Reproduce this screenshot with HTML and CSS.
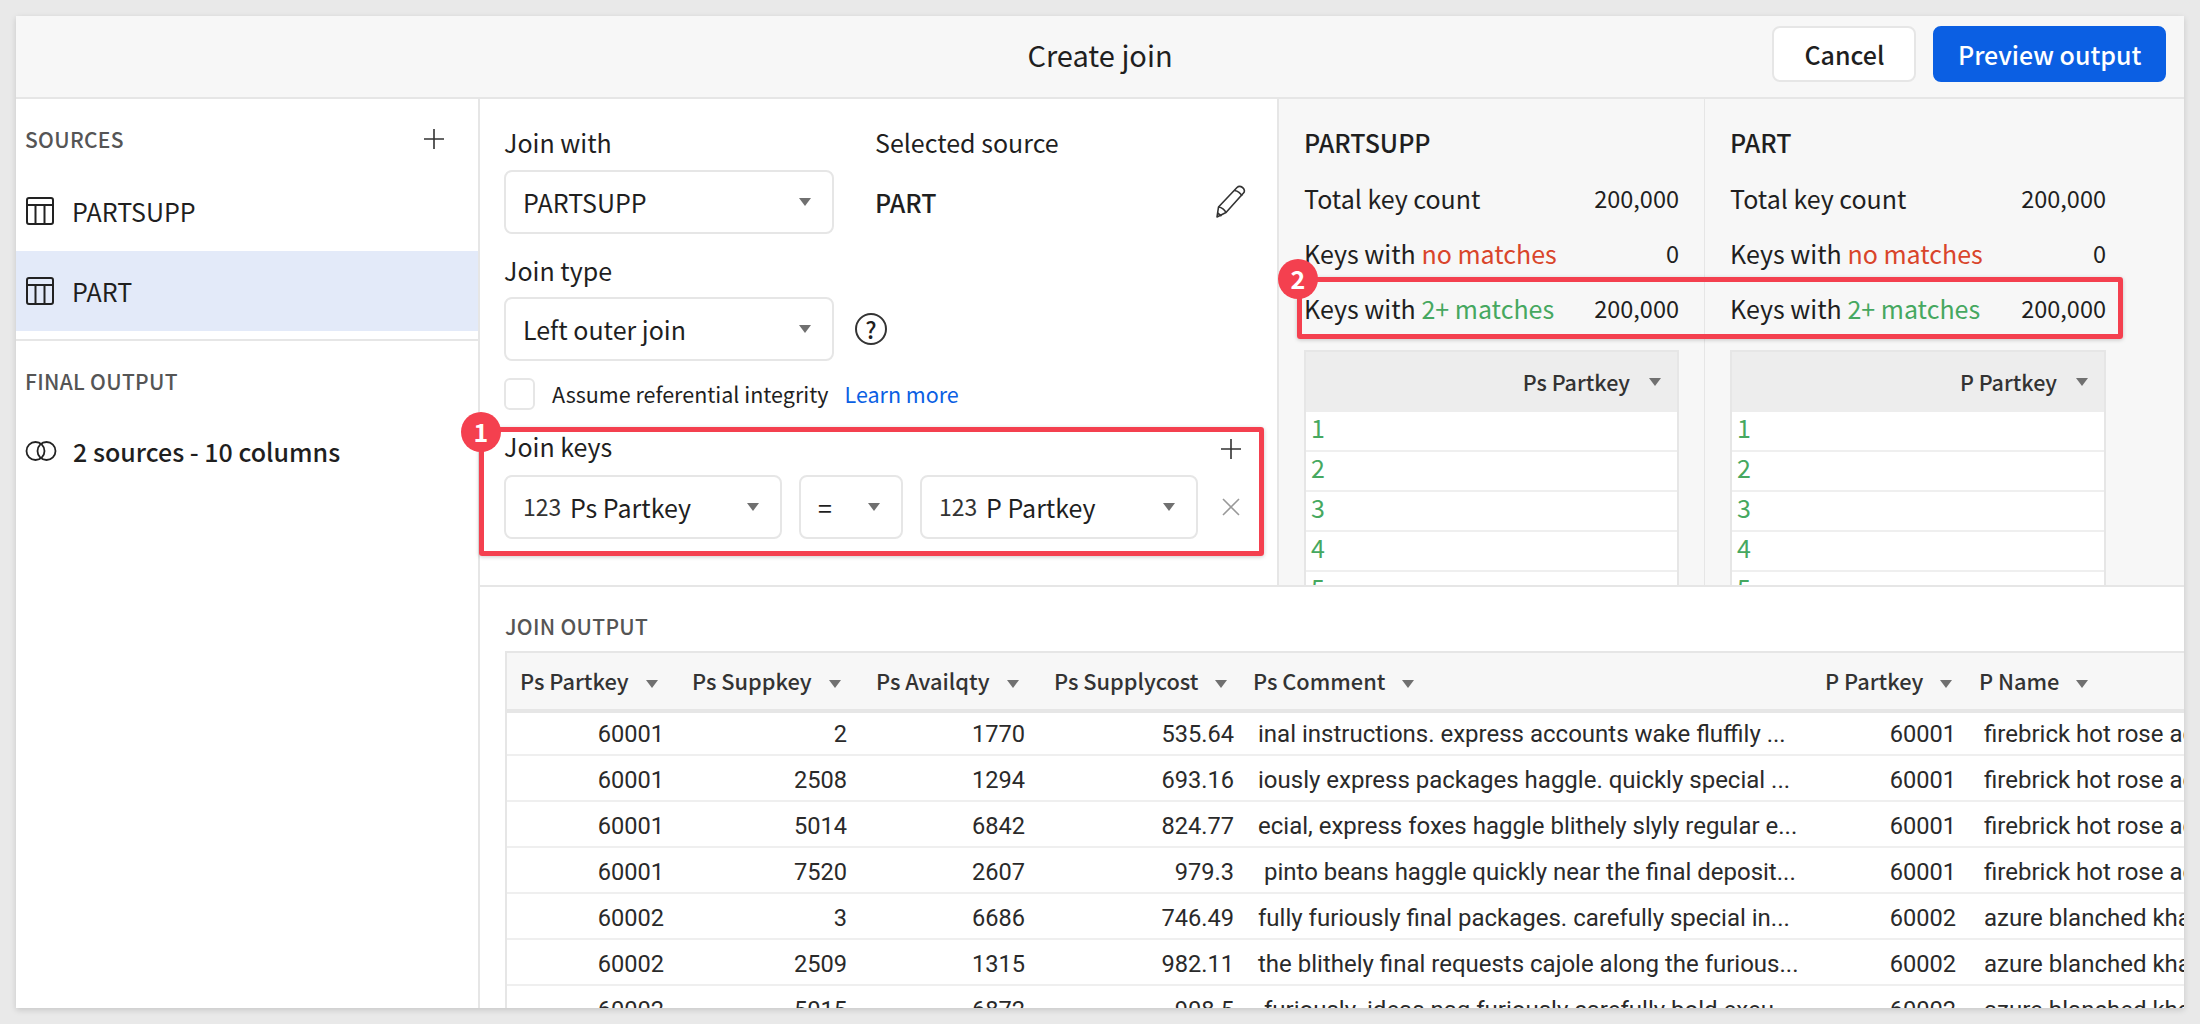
FILE: index.html
```html
<!DOCTYPE html>
<html>
<head>
<meta charset="UTF-8">
<title>Create join</title>
<link rel="stylesheet" href="styles.css">
</head>
<body>
<div class="card">
  <!-- header -->
  <div class="topbar">
    <div class="title">Create join</div>
    <div class="actions">
      <button class="btn">Cancel</button>
      <button class="btn primary">Preview output</button>
    </div>
  </div>
  <div class="content">
    <!-- left list -->
    <div class="sidebar">
      <div class="side-head">
        <span class="section">SOURCES</span>
        <svg class="side-plus" width="20" height="20" viewBox="0 0 20 20"><path d="M10 0v20M0 10h20" stroke="#333" stroke-width="1.6" fill="none"/></svg>
      </div>
      <div class="source">
        <svg width="28" height="28" viewBox="0 0 28 28" fill="none" stroke="#222" stroke-width="2"><rect x="1" y="1" width="26" height="26" rx="2"/><path d="M1 8h26M9.5 8v19M18.500 8v19"/></svg>
        <span>PARTSUPP</span>
      </div>
      <div class="source active">
        <svg width="28" height="28" viewBox="0 0 28 28" fill="none" stroke="#222" stroke-width="2"><rect x="1" y="1" width="26" height="26" rx="2"/><path d="M1 8h26M9.5 8v19M18.500 8v19"/></svg>
        <span>PART</span>
      </div>
      <div class="side-final">
        <div class="section">FINAL OUTPUT</div>
        <div class="final-row">
          <svg width="32" height="20" viewBox="0 0 32 20" fill="none" stroke="#222" stroke-width="1.8"><circle cx="10.500" cy="10" r="9"/><circle cx="21.500" cy="10" r="9"/></svg>
          <strong>2 sources - 10 columns</strong>
        </div>
      </div>
    </div>

    <div class="main">
      <div class="upper">
        <!-- join form -->
        <div class="form">
          <div class="form-row">
            <div class="field">
              <div class="label">Join with</div>
              <div class="select wide"><span>PARTSUPP</span><i class="caret"></i></div>
            </div>
            <div class="field grow">
              <div class="label">Selected source</div>
              <div class="selected">
                <strong>PART</strong>
                <svg width="32" height="34" viewBox="0 0 32 34" fill="none" stroke="#333" stroke-width="1.6" stroke-linejoin="round"><path d="M2 32l1.500-10L22 2.500c1.500-1.500 3.500-1.500 5.500 0s2.500 4 1 5.500L11 27.500z"/><path d="M3.500 22c3 .5 6 2.500 7.500 5.500M19.500 5.500c3 .5 6 2.500 7.500 5.500M2.500 28l4 3"/></svg>
              </div>
            </div>
          </div>
          <div class="label type-label">Join type</div>
          <div class="type-row">
            <div class="select wide"><span>Left outer join</span><i class="caret"></i></div>
            <div class="help">?</div>
          </div>
          <div class="check-row">
            <div class="checkbox"></div>
            <span>Assume referential integrity</span>
            <a class="link" href="#">Learn more</a>
          </div>
          <div class="keys-head">
            <div class="label">Join keys</div>
            <svg class="keys-plus" width="20" height="20" viewBox="0 0 20 20"><path d="M10 0v20M0 10h20" stroke="#333" stroke-width="1.6" fill="none"/></svg>
          </div>
          <div class="keys-row">
            <div class="select key"><small>123</small><span>Ps Partkey</span><i class="caret"></i></div>
            <div class="select op"><span>=</span><i class="caret"></i></div>
            <div class="select key"><small>123</small><span>P Partkey</span><i class="caret"></i></div>
            <svg class="key-x" width="18" height="18" viewBox="0 0 18 18"><path d="M1 1l16 16M17 1L1 17" stroke="#999" stroke-width="1.600" fill="none"/></svg>
          </div>
        </div>

        <!-- key stats -->
        <div class="stats">
          <div class="stat-col">
            <div class="stat-title">PARTSUPP</div>
            <div class="stat"><span>Total key count</span><b>200,000</b></div>
            <div class="stat"><span>Keys with <em class="red">no matches</em></span><b>0</b></div>
            <div class="stat"><span>Keys with <em class="green">2+ matches</em></span><b>200,000</b></div>
            <div class="mini">
              <div class="mini-head">Ps Partkey<i class="caret"></i></div>
              <div class="mini-row">1</div>
              <div class="mini-row">2</div>
              <div class="mini-row">3</div>
              <div class="mini-row">4</div>
              <div class="mini-row">5</div>
            </div>
          </div>
          <div class="stat-col">
            <div class="stat-title">PART</div>
            <div class="stat"><span>Total key count</span><b>200,000</b></div>
            <div class="stat"><span>Keys with <em class="red">no matches</em></span><b>0</b></div>
            <div class="stat"><span>Keys with <em class="green">2+ matches</em></span><b>200,000</b></div>
            <div class="mini">
              <div class="mini-head">P Partkey<i class="caret"></i></div>
              <div class="mini-row">1</div>
              <div class="mini-row">2</div>
              <div class="mini-row">3</div>
              <div class="mini-row">4</div>
              <div class="mini-row">5</div>
            </div>
          </div>
        </div>
      </div>

      <!-- output table -->
      <div class="output">
        <div class="section out-title">JOIN OUTPUT</div>
        <div class="grid">
          <div class="grid-head">
            <div>Ps Partkey<i class="caret"></i></div>
            <div>Ps Suppkey<i class="caret"></i></div>
            <div>Ps Availqty<i class="caret"></i></div>
            <div>Ps Supplycost<i class="caret"></i></div>
            <div>Ps Comment<i class="caret"></i></div>
            <div>P Partkey<i class="caret"></i></div>
            <div>P Name<i class="caret"></i></div>
          </div>
          <div class="grid-row"><div class="num">60001</div><div class="num">2</div><div class="num">1770</div><div class="num">535.64</div><div class="txt">inal instructions. express accounts wake fluffily ...</div><div class="num">60001</div><div class="txt name">firebrick hot rose aquamarine drab</div></div>
          <div class="grid-row"><div class="num">60001</div><div class="num">2508</div><div class="num">1294</div><div class="num">693.16</div><div class="txt">iously express packages haggle. quickly special ...</div><div class="num">60001</div><div class="txt name">firebrick hot rose aquamarine drab</div></div>
          <div class="grid-row"><div class="num">60001</div><div class="num">5014</div><div class="num">6842</div><div class="num">824.77</div><div class="txt">ecial, express foxes haggle blithely slyly regular e...</div><div class="num">60001</div><div class="txt name">firebrick hot rose aquamarine drab</div></div>
          <div class="grid-row"><div class="num">60001</div><div class="num">7520</div><div class="num">2607</div><div class="num">979.3</div><div class="txt">&nbsp;pinto beans haggle quickly near the final deposit...</div><div class="num">60001</div><div class="txt name">firebrick hot rose aquamarine drab</div></div>
          <div class="grid-row"><div class="num">60002</div><div class="num">3</div><div class="num">6686</div><div class="num">746.49</div><div class="txt">fully furiously final packages. carefully special in...</div><div class="num">60002</div><div class="txt name">azure blanched khaki snow plum</div></div>
          <div class="grid-row"><div class="num">60002</div><div class="num">2509</div><div class="num">1315</div><div class="num">982.11</div><div class="txt">the blithely final requests cajole along the furious...</div><div class="num">60002</div><div class="txt name">azure blanched khaki snow plum</div></div>
          <div class="grid-row"><div class="num">60002</div><div class="num">5015</div><div class="num">6872</div><div class="num">908.5</div><div class="txt">&nbsp;furiously. ideas nag furiously carefully bold exeu...</div><div class="num">60002</div><div class="txt name">azure blanched khaki snow plum</div></div>
        </div>
      </div>
    </div>
  </div>

  <!-- red callouts sit over the panels -->
  <div class="callout box1"></div>
  <div class="callout box2"></div>
  <div class="badge badge1">1</div>
  <div class="badge badge2">2</div>
</div>
</body>
</html>
```

FILE: styles.css
```css
* {
	box-sizing: border-box;
}
body {
	margin: 0;
	padding: 16px;
	height: 1024px;
	overflow: hidden;
	background-color: #e9e9e9;
	color: #1f1f1f;
	font-family: "Noto Sans CJK SC", "Liberation Sans", sans-serif;
	font-size: 25px;
	line-height: 32px;
}
.card {
	position: relative;
	display: flex;
	flex-direction: column;
	width: 2168px;
	height: 992px;
	overflow: hidden;
	background-color: #fff;
	box-shadow: 0 2px 6px rgba(0, 0, 0, 0.15);
}
.caret {
	display: inline-block;
	flex: none;
	width: 0;
	height: 0;
	border-left: 6px solid transparent;
	border-right: 6px solid transparent;
	border-top: 8px solid #707070;
}

/* header */
.topbar {
	position: relative;
	flex: none;
	display: flex;
	justify-content: flex-end;
	align-items: center;
	height: 83px;
	padding: 0 18px 5px 0;
	background-color: #f7f7f7;
	border-bottom: 2px solid #e6e6e6;
}
.title {
	position: absolute;
	left: 0;
	right: 0;
	text-align: center;
	font-size: 29px;
}
.actions {
	display: flex;
	gap: 17px;
}
.btn {
	height: 56px;
	padding: 0 30px;
	border: 2px solid #e6e6e6;
	border-radius: 8px;
	background-color: #fff;
	color: #1f1f1f;
	font-family: inherit;
	font-size: 25px;
	font-weight: 500;
}
.btn.primary {
	padding: 0 22.500px;
	border-color: #0b5fe3;
	background-color: #0b5fe3;
	color: #fff;
}

.content {
	flex: 1;
	display: flex;
	min-height: 0;
}

/* sidebar */
.sidebar {
	flex: none;
	width: 464px;
	border-right: 2px solid #e6e6e6;
}
.section {
	color: #555;
	font-size: 21px;
	font-weight: 500;
	letter-spacing: 0.3px;
}
.side-head {
	display: flex;
	justify-content: space-between;
	align-items: center;
	height: 72px;
	padding: 8px 34px 0 9px;
}
.source {
	display: flex;
	align-items: center;
	gap: 18px;
	height: 80px;
	padding-left: 10px;
}
.source.active {
	background-color: #e3eaf9;
}
.side-final {
	margin-top: 8px;
	padding: 24px 9px 0;
	border-top: 2px solid #e6e6e6;
}
.final-row {
	display: flex;
	align-items: center;
	gap: 16px;
	margin-top: 38px;
}
.final-row strong {
	font-weight: 500;
}

/* form */
.main {
	flex: 1;
	min-width: 0;
	display: flex;
	flex-direction: column;
}
.upper {
	flex: none;
	display: flex;
	height: 488px;
	border-bottom: 2px solid #e6e6e6;
}
.form {
	flex: none;
	width: 799px;
	padding: 27px 30px 0 24px;
	border-right: 2px solid #e6e6e6;
}
.form-row {
	display: flex;
	gap: 41px;
}
.field.grow {
	flex: 1;
}
.label {
	margin-bottom: 12px;
}
.select {
	display: flex;
	align-items: center;
	justify-content: space-between;
	height: 64px;
	padding: 0 21px 0 17px;
	border: 2px solid #e6e6e6;
	border-radius: 8px;
	background-color: #fff;
}
.select.wide {
	width: 330px;
}
.select.key {
	width: 278px;
}
.select.op {
	width: 104px;
}
.select small {
	flex: none;
	width: 47px;
	margin-top: -3px;
	font-size: 23px;
	color: #333;
}
.select.key span {
	flex: 1;
}
.selected {
	display: flex;
	justify-content: space-between;
	align-items: center;
	height: 64px;
}
.selected strong {
	font-weight: 500;
}
.type-label {
	margin-top: 20px;
	margin-bottom: 11px;
}
.type-row {
	display: flex;
	align-items: center;
	gap: 21px;
}
.help {
	width: 32px;
	height: 32px;
	border: 2px solid #333;
	border-radius: 50%;
	text-align: center;
	font-size: 23px;
	font-weight: 500;
	line-height: 28px;
}
.check-row {
	display: flex;
	align-items: center;
	margin-top: 17px;
	font-size: 21.5px;
}
.checkbox {
	width: 31px;
	height: 32px;
	margin-right: 17px;
	border: 2px solid #e6e6e6;
	border-radius: 6px;
	background-color: #fff;
}
.link {
	margin-left: 16px;
	color: #0b5fe3;
	text-decoration: none;
}
.keys-head {
	display: flex;
	justify-content: space-between;
	align-items: center;
	margin-top: 20px;
	padding-right: 6px;
}
.keys-head .label {
	margin-bottom: 0;
}
.keys-plus {
	margin-top: 6px;
}
.keys-row {
	display: flex;
	align-items: center;
	gap: 17px;
	margin-top: 13px;
}
.key-x {
	margin-left: 7px;
}

/* stats */
.stats {
	flex: 1;
	display: flex;
	overflow: hidden;
	background-color: #f7f7f7;
}
.stat-col {
	flex: none;
	width: 426px;
	padding: 27px 25px 0 25px;
	border-right: 1px solid #e6e6e6;
}
.stat-col:last-child {
	border-right: 0;
}
.stat-title {
	margin-bottom: 12px;
	font-weight: 500;
}
.stat {
	display: flex;
	justify-content: space-between;
	align-items: center;
	height: 55px;
}
.stat b {
	font-size: 23.5px;
	font-weight: 400;
}
.stat em {
	font-style: normal;
}
.red {
	color: #d9452b;
}
.green {
	color: #46a860;
}
.mini {
	margin-top: 15px;
	border: 2px solid #e6e6e6;
	border-bottom: 0;
	background-color: #fff;
}
.mini-head {
	display: flex;
	justify-content: flex-end;
	align-items: center;
	gap: 19px;
	height: 60px;
	padding-right: 16px;
	background-color: #ededed;
	color: #333;
	font-size: 21.5px;
	font-weight: 500;
}
.mini-row {
	height: 40px;
	padding-left: 5px;
	border-bottom: 2px solid #efefef;
	color: #46a860;
	font-size: 25px;
	line-height: 31px;
}

/* output */
.output {
	flex: 1;
	min-height: 0;
	padding-top: 23px;
	padding-left: 25px;
}
.out-title {
	line-height: 32px;
	margin-top: 0;
	margin-bottom: 9px;
}
.grid {
	border-left: 2px solid #e6e6e6;
	border-top: 2px solid #e6e6e6;
}
.grid-head,
.grid-row {
	display: grid;
	align-items: center;
}
/* header covers the top of the first row, as a sticky header does */
.grid-head {
	position: relative;
	z-index: 1;
	grid-template-columns: 172px 184px 178px 199px 572px 154px 1fr;
	height: 60px;
	margin-bottom: -3px;
	background-color: #f7f7f7;
	border-bottom: 4px solid #e6e6e6;
	color: #333;
	font-size: 21.8px;
	font-weight: 500;
}
.grid-head > div {
	padding-left: 13px;
	white-space: nowrap;
}
.grid-head .caret {
	margin-left: 17px;
	vertical-align: 2px;
}
.grid-row {
	grid-template-columns: 173px 183px 178px 209px 560px 162px 1fr;
	height: 46px;
	padding-top: 4px;
	border-bottom: 2px solid #efefef;
	font-family: Roboto, "Liberation Sans", sans-serif;
	color: #2a2a2a;
}
.grid-row > div {
	overflow: hidden;
	white-space: nowrap;
}
.grid-row .num {
	padding-right: 16px;
	text-align: right;
	font-size: 23.6px;
}
.grid-row .txt {
	padding-left: 8px;
	font-size: 24px;
}
.grid-row .name {
	padding-left: 12px;
}

/* red annotation */
.callout {
	position: absolute;
	z-index: 2;
	border: 5px solid #f4404f;
	border-radius: 3px;
	box-shadow: 0 1px 4px rgba(0, 0, 0, 0.2);
}
.box1 {
	left: 463px;
	top: 411px;
	width: 785px;
	height: 129px;
}
.box2 {
	left: 1281px;
	top: 261px;
	width: 826px;
	height: 62px;
}
.badge {
	position: absolute;
	z-index: 2;
	width: 40px;
	height: 40px;
	border-radius: 50%;
	background-color: #f4404f;
	color: #fff;
	text-align: center;
	font-size: 25px;
	font-weight: 700;
	line-height: 38px;
}
.badge1 {
	left: 445px;
	top: 396px;
}
.badge2 {
	left: 1262px;
	top: 243px;
}
```
